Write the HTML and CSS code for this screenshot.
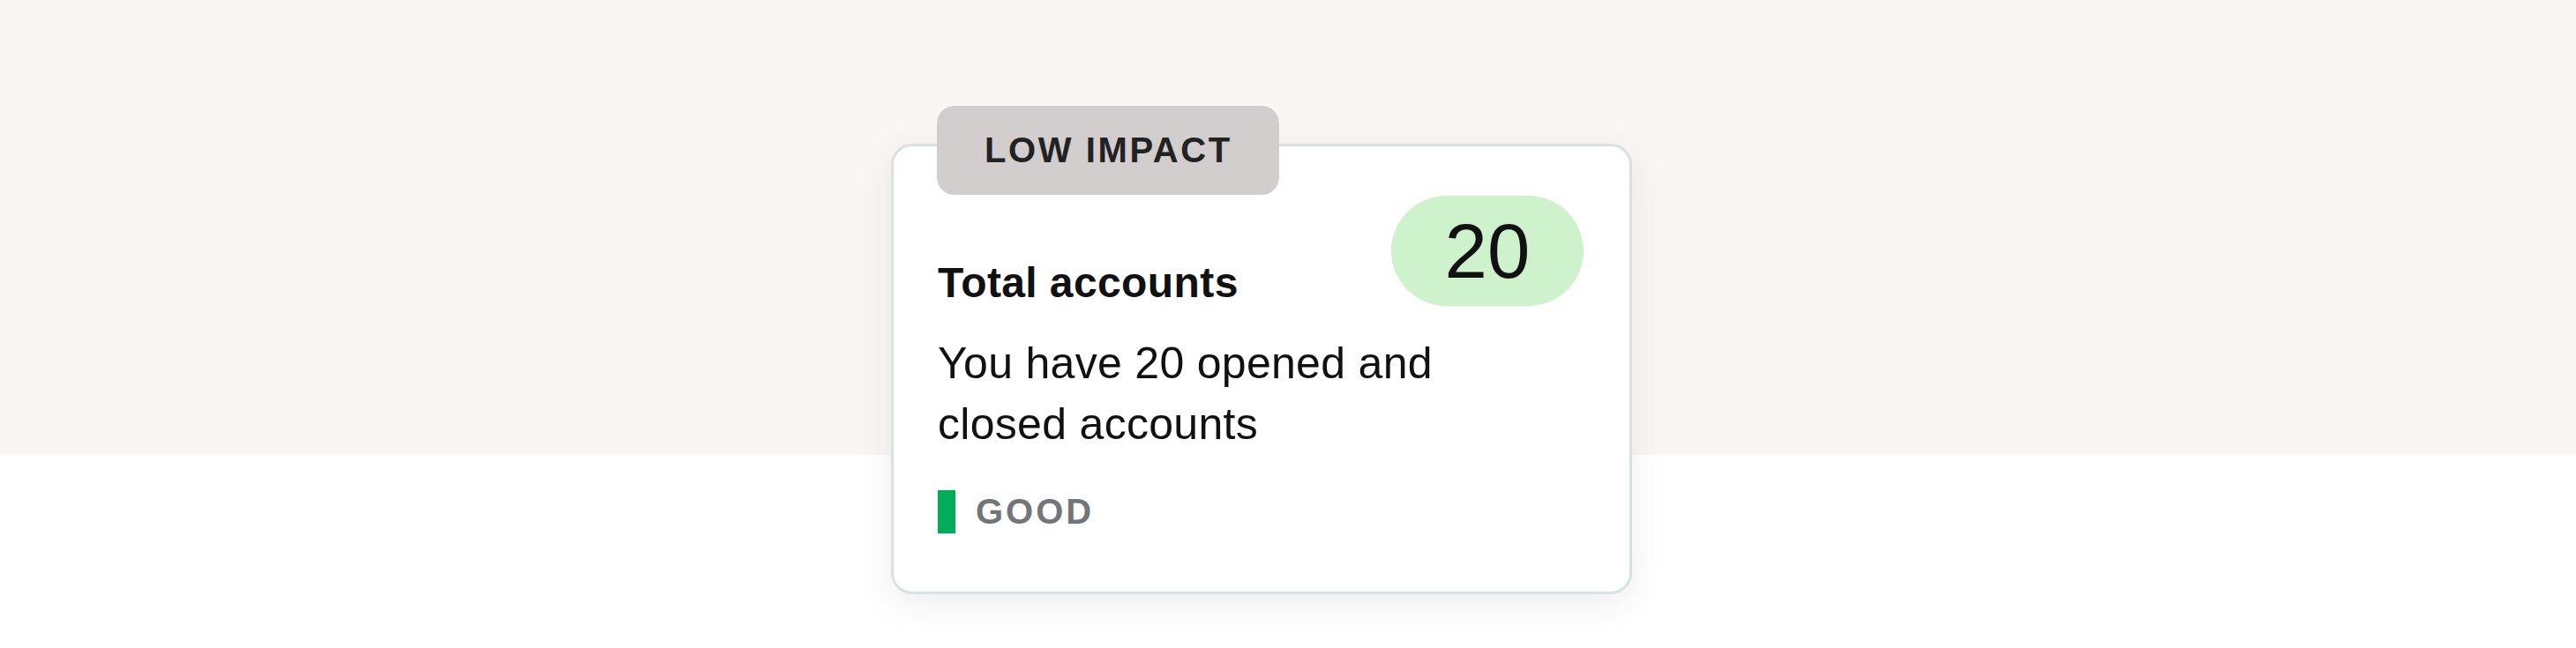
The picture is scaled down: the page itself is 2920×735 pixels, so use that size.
FILE: index.html
```html
<!DOCTYPE html>
<html lang="en">
<head>
    <meta charset="UTF-8">
    <meta name="viewport" content="width=device-width, initial-scale=1">
    <title>Total accounts</title>
    <link rel="stylesheet" href="styles.css">
</head>
<body>
    <div class="stage">
        <div class="factor">
            <span class="impact">LOW IMPACT</span>
            <div class="card">
                <div class="card-head">
                    <h2 class="title">Total accounts</h2>
                    <span class="count">20</span>
                </div>
                <p class="desc">You have 20 opened and closed accounts</p>
                <div class="rating">
                    <span class="rating-bar"></span>
                    <span class="rating-label">GOOD</span>
                </div>
            </div>
        </div>
    </div>
</body>
</html>
```

FILE: styles.css
```css
body {
    margin: 0;
    font-family: "Liberation Sans", Arial, sans-serif;
    background: linear-gradient(to bottom, #f9f6f3 516px, #ffffff 516px);
    color: #111;
    min-height: 735px;
}
.stage {
    display: flex;
    justify-content: center;
    padding-top: 120px;
}
.factor {
    width: 840px;
    margin-right: 60px;
}
.impact {
    position: relative;
    z-index: 1;
    display: inline-flex;
    align-items: center;
    height: 101px;
    margin-left: 52px;
    padding: 0 53px 0 54px;
    background: #d1cecd;
    border-radius: 20px;
    font-size: 40px;
    font-weight: bold;
    letter-spacing: 2.6px;
    color: #222;
}
.card {
    margin-top: -58px;
    background: #fff;
    border: 3px solid #d6e2e3;
    border-radius: 24px;
    box-shadow: 0px 12px 40px rgba(0, 0, 0, 0.07);
    padding: 56px 52px 66px 50px;
}
.card-head {
    display: flex;
    justify-content: space-between;
    align-items: flex-start;
    height: 128px;
}
.title {
    margin: 70px 0 0;
    font-size: 48px;
    line-height: 58px;
    font-weight: bold;
    letter-spacing: 0.4px;
}
.count {
    display: flex;
    align-items: center;
    justify-content: center;
    width: 218px;
    height: 125px;
    border-radius: 63px;
    background: #cdf2cc;
    font-size: 87px;
    line-height: 1;
}
.desc {
    max-width: 640px;
    margin: 28px 0 0;
    font-size: 50px;
    line-height: 69px;
    letter-spacing: 0.3px;
}
.rating {
    display: flex;
    align-items: center;
    gap: 23px;
    margin-top: 40px;
}
.rating-bar {
    width: 20px;
    height: 49px;
    background: #00ae5a;
}
.rating-label {
    font-size: 40px;
    line-height: 49px;
    font-weight: bold;
    letter-spacing: 3px;
    color: #72767b;
}
```
